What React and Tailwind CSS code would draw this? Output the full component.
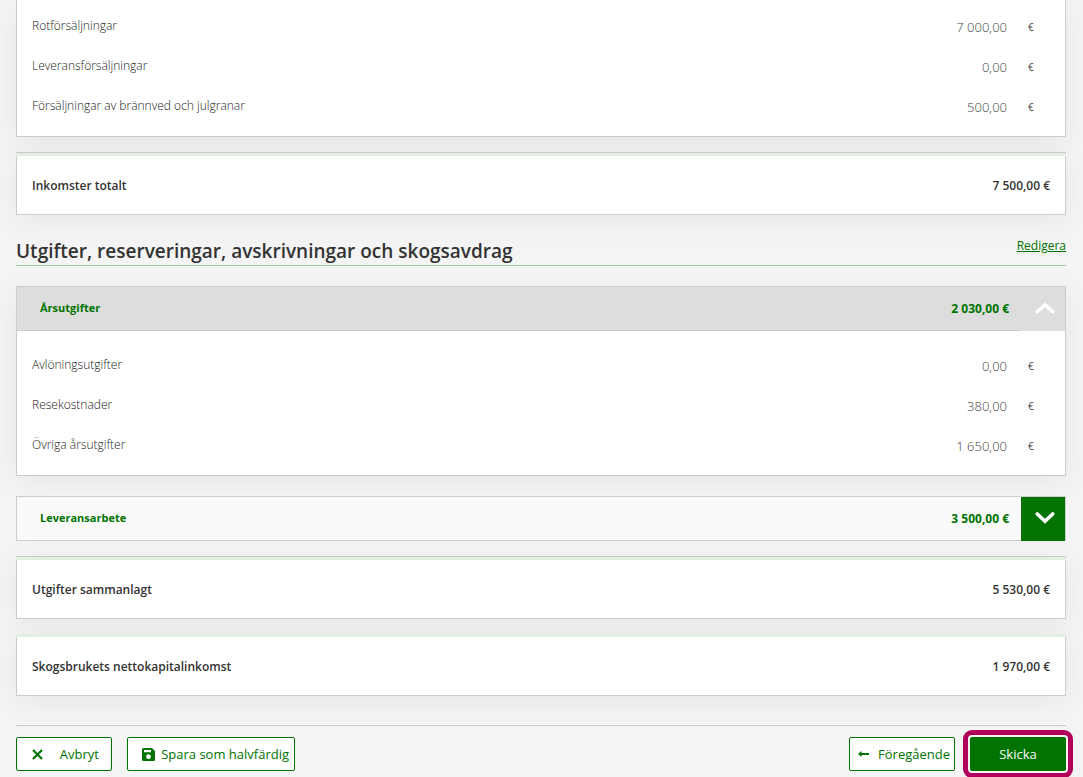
const sales = [
  { label: 'Rotförsäljningar', value: '7 000,00' },
  { label: 'Leveransförsäljningar', value: '0,00' },
  { label: 'Försäljningar av brännved och julgranar', value: '500,00' },
]

const yearlyExpenses = [
  { label: 'Avlöningsutgifter', value: '0,00' },
  { label: 'Resekostnader', value: '380,00' },
  { label: 'Övriga årsutgifter', value: '1 650,00' },
]

function Rows({ items }) {
  return (
    <dl className="px-[15px] pb-[11px]">
      {items.map((item) => (
        <div key={item.label} className="flex h-10 items-center justify-between pt-px">
          <dt className="text-[12px] font-light text-[#222222]">{item.label}</dt>
          <dd className="flex items-center pt-1 text-[13px] font-light text-[#444444]">
            {item.value}
            <span className="w-[43px] pl-[21px] text-[10px] font-normal text-[#444444]">€</span>
          </dd>
        </div>
      ))}
    </dl>
  )
}

function TotalCard({ label, value, line }) {
  return (
    <section
      className={
        line
          ? 'mt-[15px] border-t border-[#cccccc] shadow-[0_6px_30px_rgba(0,0,0,0.06)]'
          : 'mt-[15px] shadow-[0_6px_30px_rgba(0,0,0,0.06)]'
      }
    >
      <div className="h-[3px] bg-[#e4ede4]" />
      <div className="flex h-[59px] items-center justify-between border-x border-b border-[#cccccc] bg-white px-[15px] pt-0.5 text-[12px] font-semibold text-[#333333]">
        <span>{label}</span>
        <span>{value}</span>
      </div>
    </section>
  )
}

function Chevron({ up }) {
  return (
    <svg width="20" height="12" viewBox="0 0 20 12" fill="none" stroke="white" strokeWidth="3.6" strokeLinecap="round" strokeLinejoin="miter" aria-hidden="true">
      {up ? <path d="M2.3 9.5 10 2.8 17.7 9.5" /> : <path d="M2.3 2 10 9.2 17.7 2" />}
    </svg>
  )
}

function Accordion({ title, value, open, children }) {
  return (
    <section
      className={
        open
          ? 'mt-5 border border-[#cccccc] bg-white shadow-[0_6px_30px_rgba(0,0,0,0.06)]'
          : 'mt-5 border-x border-t border-[#cccccc] bg-[#fafafa]'
      }
    >
      <h3>
        <button type="button" aria-expanded={open} className="flex h-11 w-full font-bold text-[#007300]">
          <span
            className={
              open
                ? 'flex h-full flex-1 items-center justify-between border-b border-[#cccccc] bg-[#dddddd] pr-3 pl-[23px]'
                : 'flex h-full flex-1 items-center justify-between border-b border-[#cccccc] pr-3 pl-[23px]'
            }
          >
            <span className="text-[11px]">{title}</span>
            <span className="text-[12px]">{value}</span>
          </span>
          <span
            className={
              open
                ? 'flex h-full w-11 items-center justify-center bg-[#dddddd] pb-0.5 pl-1'
                : 'flex h-full w-11 items-center justify-center bg-[#007300] pb-0.5 pl-1'
            }
          >
            <Chevron up={open} />
          </span>
        </button>
      </h3>
      {children}
    </section>
  )
}

export default function App() {
  return (
    <main className="min-h-screen bg-[#f4f4f4] pr-[17px] pb-1.5 pl-4 font-['Open_Sans','Noto_Sans',sans-serif]">
      <section className="border-x border-b border-[#cccccc] bg-white pt-[5px] shadow-[0_6px_30px_rgba(0,0,0,0.06)]">
        <Rows items={sales} />
      </section>
      <TotalCard label="Inkomster totalt" value="7 500,00 €" line />

      <header className="flex h-[51px] items-end justify-between border-b border-[#99cc99]">
        <h2 className="text-[19px] leading-7 font-semibold text-[#333333]">Utgifter, reserveringar, avskrivningar och skogsavdrag</h2>
        <a href="#redigera" className="pb-[11px] text-[12px] leading-4 text-[#007300] underline">
          Redigera
        </a>
      </header>

      <Accordion title="Årsutgifter" value="2 030,00 €" open>
        <div className="pt-[13px]">
          <Rows items={yearlyExpenses} />
        </div>
      </Accordion>
      <Accordion title="Leveransarbete" value="3 500,00 €" open={false} />
      <TotalCard label="Utgifter sammanlagt" value="5 530,00 €" line />
      <TotalCard label="Skogsbrukets nettokapitalinkomst" value="1 970,00 €" />

      <footer className="mt-[29px] flex justify-between border-t border-[#cccccc] pt-[11px] text-[13px] text-[#007300]">
        <div className="flex gap-[15px]">
          <button type="button" className="flex h-[34px] w-24 items-center justify-between rounded-[2px] border border-[#007300] bg-white pr-3 pl-[15px]">
            <svg className="shrink-0" width="11" height="11" viewBox="0 0 11 11" fill="none" stroke="currentColor" strokeWidth="2.2" aria-hidden="true">
              <path d="M1 1 10 10M10 1 1 10" />
            </svg>
            <span className="pt-0.5">Avbryt</span>
          </button>
          <button type="button" className="flex h-[34px] w-[168px] items-center justify-between rounded-[2px] border border-[#007300] bg-white pr-[5px] pl-3.5 whitespace-nowrap">
            <svg className="shrink-0" width="13" height="13" viewBox="0 0 13 13" aria-hidden="true">
              <path fill="currentColor" fillRule="evenodd" d="M1.5 0H10l3 3v8.500a1.500 1.500 0 0 1-1.500 1.500h-10A1.500 1.500 0 0 1 0 11.500v-10A1.500 1.500 0 0 1 1.500 0ZM2 2v2.200h7V2ZM6.500 6.300a2.400 2.400 0 1 0 0 4.800 2.400 2.400 0 0 0 0-4.800Z" />
            </svg>
            <span className="pt-0.5">Spara som halvfärdig</span>
          </button>
        </div>
        <div className="flex gap-[15px]">
          <button type="button" className="flex h-[34px] w-[106px] items-center justify-between rounded-[2px] border border-[#007300] bg-white pr-1 pl-2">
            <svg className="shrink-0" width="11" height="6" viewBox="0 0 11 6" fill="currentColor" aria-hidden="true">
              <path d="M0 3 3.500 0v2H11v2H3.500v2Z" />
            </svg>
            <span className="pt-0.5">Föregående</span>
          </button>
          <button type="button" className="h-[34px] w-24 rounded-[2px] bg-[#007300] pt-0.5 text-white outline-[5px] outline-offset-2 outline-[#b0005c]">
            Skicka
          </button>
        </div>
      </footer>
    </main>
  )
}
